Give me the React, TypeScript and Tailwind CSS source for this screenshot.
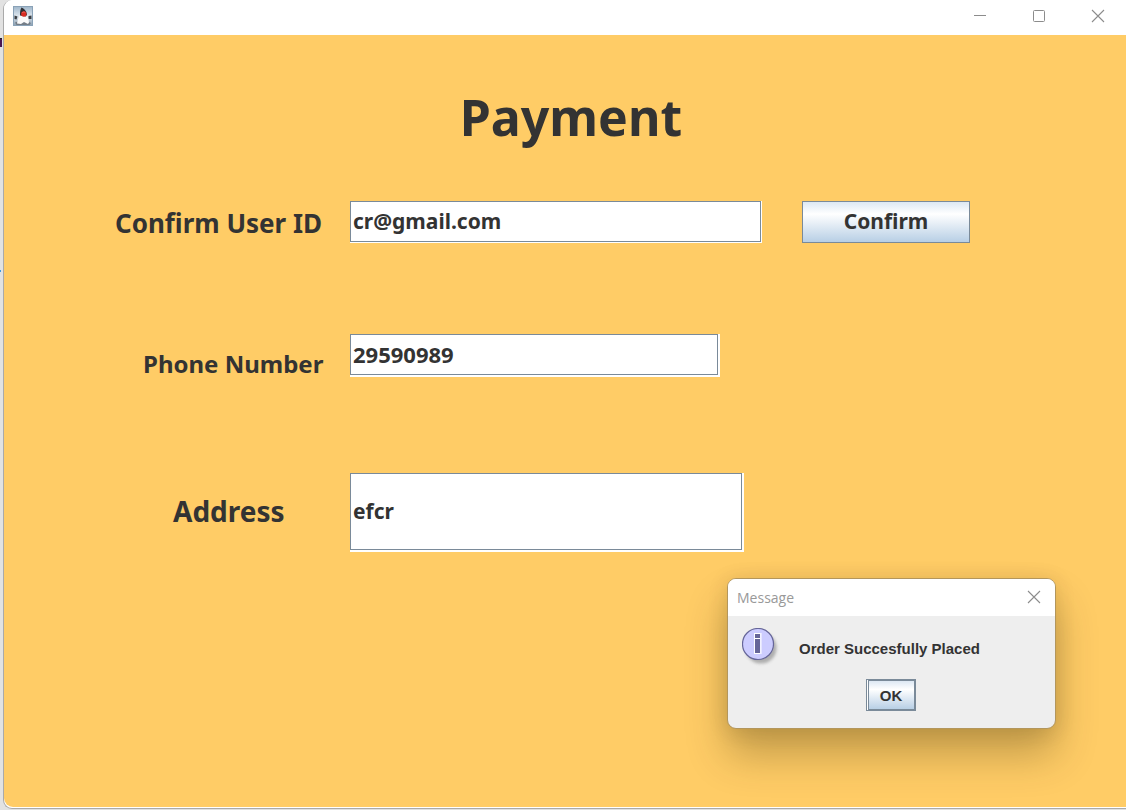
import { useState } from "react";

function DukeIcon() {
  return (
    <svg width="20" height="20" viewBox="0 0 20 20" aria-hidden="true">
      <defs>
        <linearGradient id="duke-bg" x1="0" y1="0" x2="0" y2="1">
          <stop offset="0" stopColor="#9fb6ca" />
          <stop offset="0.5" stopColor="#dde6ee" />
          <stop offset="1" stopColor="#8b9fb1" />
        </linearGradient>
      </defs>
      <rect x="0.5" y="0.5" width="19" height="19" fill="url(#duke-bg)" stroke="#8aa2b7" />
      <path d="M1.500 9.500L4.500 10.500L3.500 13.500L1.500 13ZM15.500 10L18.500 9.500L18.500 13L15.500 13Z" fill="#3a3f45" />
      <path d="M2 16.500L6 15L15 15.500L18 17L16.500 19H3.500Z" fill="#747d87" />
      <path d="M7 9C5.500 11 4.500 14 4 17.500L8 18L11 16L15 18L16 16.500C15.800 13.500 15 11 13.500 9Z" fill="#fafafa" />
      <path d="M8.500 1.500C11 2.500 13.500 5 14 8.500L13 10.500L7 9.500C6.800 6.500 7.200 3.500 8.500 1.500Z" fill="#2e2f33" />
      <circle cx="10.800" cy="8" r="2.700" fill="#d92c22" />
      <path d="M9.200 7C9.800 5.900 11.200 5.700 12 6.500" fill="none" stroke="#f1776c" strokeWidth="0.800" />
    </svg>
  );
}

function CloseIcon() {
  return (
    <svg width="14" height="14" viewBox="0 0 14 14" fill="none" stroke="#8c8c8c" strokeWidth="1.1" aria-hidden="true">
      <path d="M1 1L13 13M13 1L1 13" />
    </svg>
  );
}

function InfoIcon() {
  return (
    <svg width="38" height="40" viewBox="0 0 38 40" role="img" aria-label="Information">
      <defs>
        <filter id="info-shadow" x="-20%" y="-20%" width="150%" height="150%">
          <feGaussianBlur stdDeviation="1.5" />
        </filter>
      </defs>
      <circle cx="19" cy="20" r="15.500" fill="#999" opacity="0.75" filter="url(#info-shadow)" />
      <circle cx="16" cy="16" r="15.500" fill="#ccccff" stroke="#666699" strokeWidth="1.2" />
      <path d="M12 5H19V26H12Z" fill="#fff" />
      <path d="M18.500 5H20V26H18.500Z" fill="#e4e4ff" />
      <path d="M13 6H18V10H13ZM13 11H18V25H13Z" fill="#666699" />
    </svg>
  );
}

type FieldProps = {
  id: string;
  label: string;
  initial: string;
  type: string;
  rowClass: string;
  labelClass: string;
  frameClass: string;
  textClass: string;
  children?: React.ReactNode;
};

function Field({ id, label, initial, type, rowClass, labelClass, frameClass, textClass, children }: FieldProps) {
  const [value, setValue] = useState(initial);
  return (
    <div className={`flex items-start ${rowClass}`}>
      <div className={`flex w-[346px] shrink-0 ${labelClass}`}>
        <label htmlFor={id}>{label}</label>
      </div>
      <div className={`flex bg-white ${frameClass}`}>
        <input
          id={id}
          type={type}
          value={value}
          onChange={(e) => setValue(e.target.value)}
          className={`w-full min-w-0 border border-[#7a8a99] bg-white px-0.5 font-bold outline-none ${textClass}`}
        />
      </div>
      {children}
    </div>
  );
}

function MessageDialog({ onClose }: { onClose: () => void }) {
  return (
    <section
      role="dialog"
      aria-labelledby="dialog-title"
      className="absolute top-[578px] right-[70px] w-[329px] overflow-hidden rounded-[9px] border border-[#b3965c] bg-[#eeeeee] shadow-[0_26px_40px_rgba(60,45,10,0.3),0_2px_20px_rgba(60,45,10,0.14)]"
    >
      <header className="flex h-[37px] items-center justify-between bg-white pr-3.5 pb-px pl-[9px]">
        <h2 id="dialog-title" className="font-['Open_Sans',sans-serif] text-[14px] font-normal text-[#999999]">
          Message
        </h2>
        <button type="button" aria-label="Close message" onClick={onClose}>
          <CloseIcon />
        </button>
      </header>
      <div className="flex items-start gap-[19px] pt-3 pl-3.5">
        <InfoIcon />
        <p className="pt-[11px] font-['Liberation_Sans',Arial,sans-serif] text-[15px] leading-5 font-bold">
          Order Succesfully Placed
        </p>
      </div>
      <div className="flex justify-center pt-[11px] pr-0.5 pb-[17px]">
        <button
          type="button"
          onClick={onClose}
          className="h-8 w-[50px] border border-[#7a8a99] bg-white pl-px font-['Liberation_Sans',Arial,sans-serif] text-[15px] font-bold"
        >
          <span className="flex h-full items-center justify-center border border-[#7a8a99] bg-linear-to-b from-[#dde8f3] via-white via-30% to-[#b8cfe5] pt-0.5">
            OK
          </span>
        </button>
      </div>
    </section>
  );
}

export default function App() {
  const [open, setOpen] = useState(true);
  return (
    <div className="relative flex min-h-screen overflow-hidden bg-[#e2e2e2] pb-px font-['Noto_Sans',sans-serif] text-[#333333]">
      <div className="flex w-[3px] shrink-0 flex-col gap-[223px] overflow-hidden pt-[38px]" aria-hidden="true">
        <span className="h-[9px] w-0.5 shrink-0 border-t border-[#222222] bg-[#4a1550]" />
        <span className="h-0.5 w-px shrink-0 bg-[#3d9be0]" />
      </div>
      <div className="flex grow flex-col overflow-hidden rounded-l-[9px] border-b border-l border-[#aaaaaa] bg-white pb-px">
        <header className="flex h-[35px] shrink-0 items-center justify-between bg-white pr-[21px] pb-1 pl-[9px]">
          <DukeIcon />
          <div className="flex items-center gap-[45px]">
            <button type="button" aria-label="Minimize">
              <svg width="14" height="14" viewBox="0 0 14 14" aria-hidden="true">
                <path d="M1 6.500H13" stroke="#8c8c8c" />
              </svg>
            </button>
            <button type="button" aria-label="Maximize">
              <svg width="14" height="14" viewBox="0 0 14 14" fill="none" stroke="#8c8c8c" aria-hidden="true">
                <rect x="1.500" y="1.500" width="11" height="11" rx="1" />
              </svg>
            </button>
            <button type="button" aria-label="Close">
              <CloseIcon />
            </button>
          </div>
        </header>
        <main className="grow rounded-bl-[9px] bg-[#ffcc66]">
          <h1 className="pt-[47px] pl-3 text-center text-[50px] leading-[70px] font-bold">Payment</h1>
          <form onSubmit={(e) => { e.preventDefault(); setOpen(true); }}>
            <Field
              id="user-id"
              label="Confirm User ID"
              initial="cr@gmail.com"
              type="text"
              rowClass="pt-[49px]"
              labelClass="pl-[111px] pt-1 text-[26px] leading-9 font-bold"
              frameClass="h-[42px] w-[412px] pr-px pb-px"
              textClass="text-[21px]"
            >
              <button
                type="submit"
                className="ml-10 h-[42px] w-[168px] border border-[#7a8a99] bg-linear-to-b from-[#dde8f3] via-white via-30% to-[#b8cfe5] text-[21px] font-bold"
              >
                Confirm
              </button>
            </Field>
            <Field
              id="phone"
              label="Phone Number"
              initial="29590989"
              type="tel"
              rowClass="pt-[91px]"
              labelClass="pl-[139px] pt-3 text-[24px] leading-9 font-bold"
              frameClass="h-[43px] w-[370px] pr-0.5 pb-0.5"
              textClass="text-[22px]"
            />
            <Field
              id="address"
              label="Address"
              initial="efcr"
              type="text"
              rowClass="pt-[91px]"
              labelClass="pl-[169px] pt-5 text-[28px] leading-9 font-bold"
              frameClass="h-[79px] w-[394px] pr-0.5 pb-0.5"
              textClass="text-[21px]"
            />
          </form>
        </main>
      </div>
      {open && <MessageDialog onClose={() => setOpen(false)} />}
    </div>
  );
}
